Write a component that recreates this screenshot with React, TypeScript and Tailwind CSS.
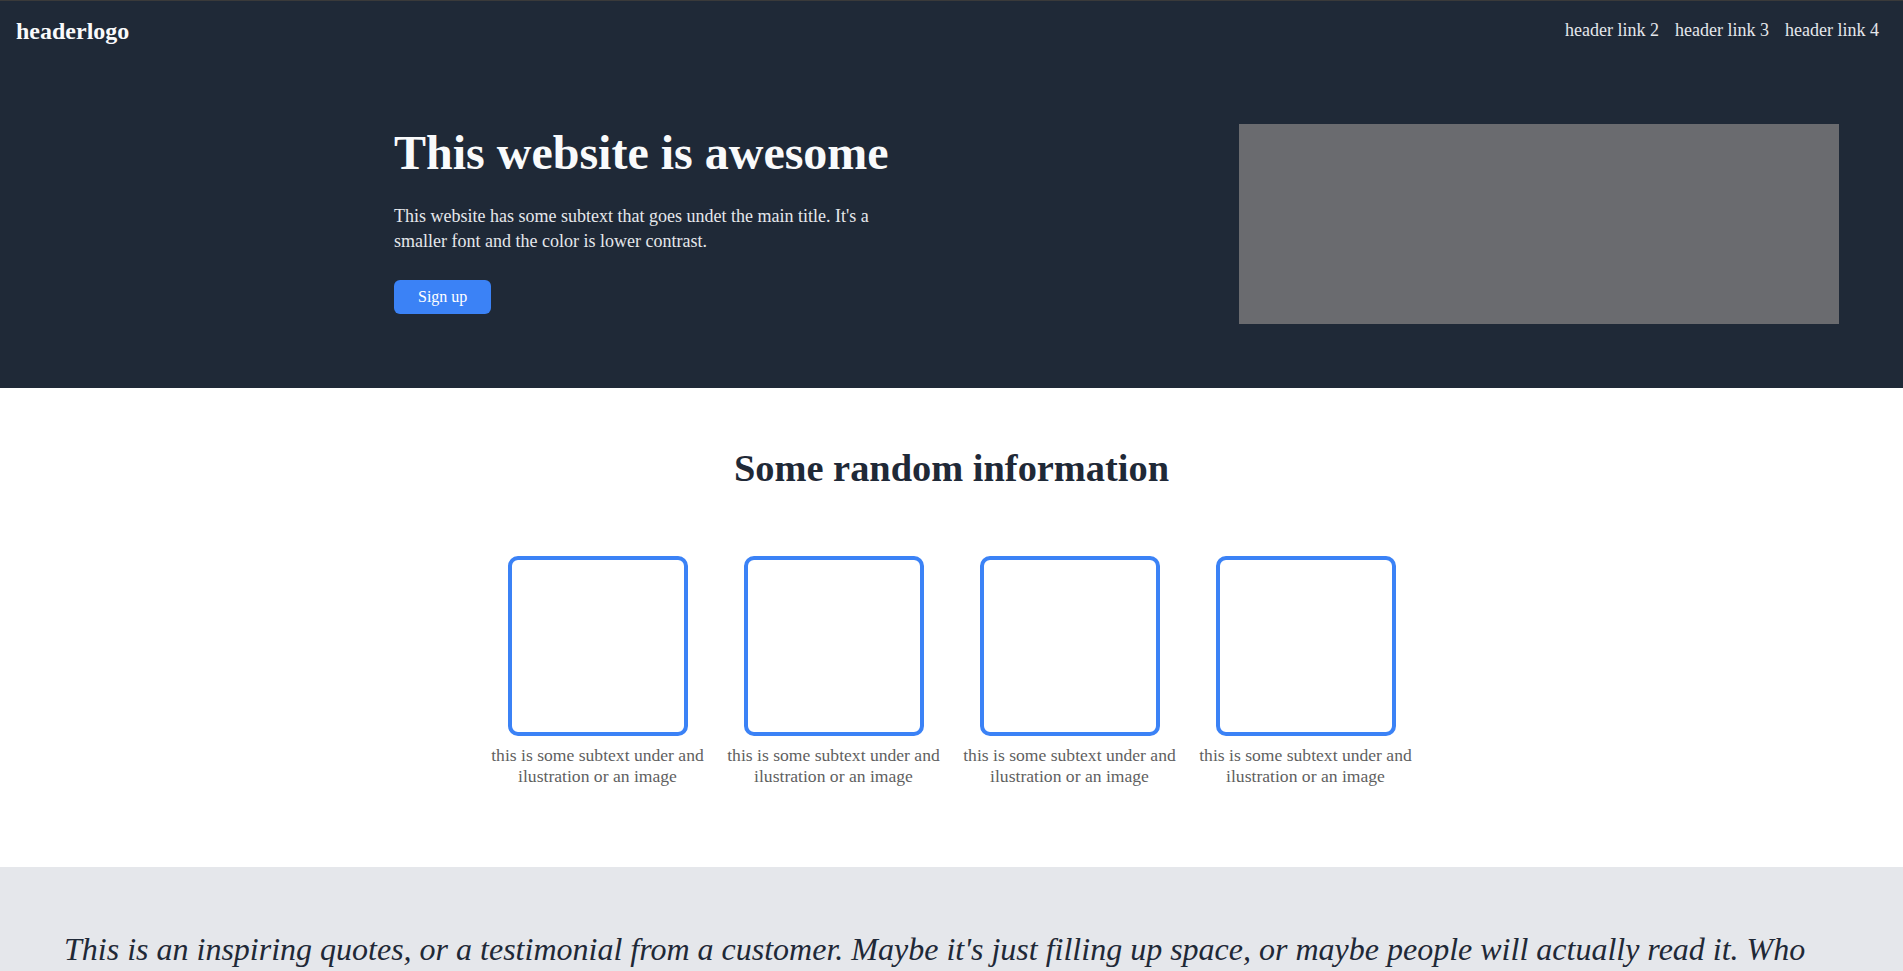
import React from "react";

const cards = [0, 1, 2, 3];

export default function App() {
  return (
    <div className="min-h-screen bg-white font-['Liberation_Serif',serif]">
      <div className="border-t border-[#3a3a3a] bg-[#1f2937]">
        <header className="flex h-[59px] items-center justify-between pl-4 pr-6">
          <div className="text-[24px] font-bold leading-[28px] text-[#f9fafb]">headerlogo</div>
          <nav className="flex gap-4 text-[18px] leading-[21px] text-[#e5e7eb]">
            <a href="#">header link 2</a>
            <a href="#">header link 3</a>
            <a href="#">header link 4</a>
          </nav>
        </header>
        <section className="flex justify-between py-16 pl-[394px] pr-16">
          <div className="w-[512px]">
            <h1 className="text-[48px] font-bold leading-[58px] text-[#f9fafb]">
              This website is awesome
            </h1>
            <p className="mt-[22px] text-[18px] leading-[25px] text-[#e5e7eb]">
              This website has some subtext that goes undet the main title. It's a smaller font and
              the color is lower contrast.
            </p>
            <button className="mt-[26px] block rounded-md bg-[#3b82f6] px-6 py-2 text-[16px] leading-[18px] text-white">
              Sign up
            </button>
          </div>
          <div className="h-[200px] w-[600px] bg-[#6a6b6f]" />
        </section>
      </div>

      <section className="bg-white pb-20 pt-[58px]">
        <h2 className="text-center text-[38.4px] font-bold leading-[44px] text-[#1f2937]">
          Some random information
        </h2>
        <div className="mt-[66px] flex justify-center">
          {cards.map((c) => (
            <div key={c} className="flex w-[236px] flex-col items-center">
              <div className="h-[180px] w-[180px] rounded-[10px] border-4 border-[#3b82f6]" />
              <p className="mt-[9px] text-center text-[17.6px] leading-[21px] text-[#5f5f5f]">
                this is some subtext under and ilustration or an image
              </p>
            </div>
          ))}
        </div>
      </section>

      <section className="bg-[#e5e7eb] px-16 py-16">
        <p className="text-[32px] italic leading-[37px] text-[#1f2937]">
          This is an inspiring quotes, or a testimonial from a customer. Maybe it's just filling up
          space, or maybe people will actually read it. Who knows? Either way, it makes the page
          look nicer and more complete.
        </p>
      </section>
    </div>
  );
}
